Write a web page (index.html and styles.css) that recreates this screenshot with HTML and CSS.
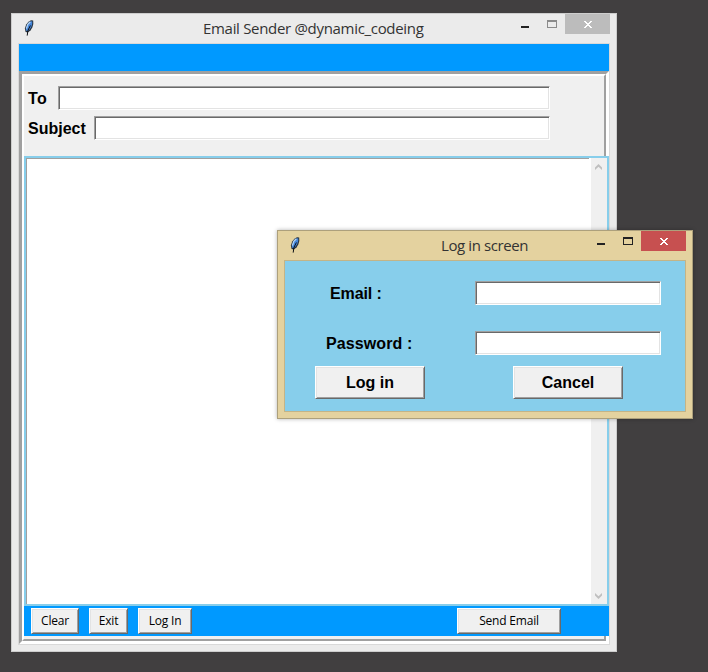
FILE: index.html
```html
<!DOCTYPE html>
<html lang="en">
<head>
<meta charset="utf-8">
<title>Email Sender</title>
<link rel="stylesheet" href="styles.css">
</head>
<body>
<svg width="0" height="0" class="defs">
  <symbol id="feather" viewBox="0 0 10 16">
    <path d="M7 .3 9.2.6 9.3 4 8.3 7.5 6.5 10.5 3.8 12.4 1.6 12 .9 8.5 2.2 4.6 4.5 1.8Z" fill="#26323f"/>
    <path d="M7 1.2 8.3 1.5 8.2 4 7.2 7 5.6 9.6 3.4 11.2 2 10.6 1.9 8.5 3 5 5 2.4Z" fill="#4587dc"/>
    <path d="M6.4 1.8 3.8 4.4 2.4 8.6" fill="none" stroke="#b4d3f2" stroke-width="1.3"/>
    <path d="M6.4 5.5 3.9 10.5 3.2 15.6" fill="none" stroke="#0b0f14" stroke-width="1"/>
  </symbol>
  <symbol id="cross" viewBox="0 0 8 7">
    <path d="M0 0h2v1h1v1h2V1h1V0h2v1H7v1H6v1H5v1h1v1h1v1h1v1H6V6H5V5H3v1H2v1H0V6h1V5h1V4h1V3H2V2H1V1H0Z" fill="#fff"/>
  </symbol>
</svg>
<main class="window main">
  <header class="titlebar">
    <svg class="feather"><use href="#feather"/></svg>
    <h1 class="title">Email Sender @dynamic_codeing</h1>
    <span class="min"></span><span class="max"></span>
    <span class="close"><svg><use href="#cross"/></svg></span>
  </header>
  <div class="client">
    <div class="band"></div>
    <div class="groove"><div class="panel">
      <div class="fields">
        <label class="row"><span class="to">To</span><input class="entry"></label>
        <label class="row"><span class="subject">Subject</span><input class="entry"></label>
      </div>
      <div class="editor">
        <div class="text"></div>
        <div class="scroll">
          <svg width="7" height="6" viewBox="0 0 7 6"><path d="M0 3.5 3.5 0 7 3.5V6L3.5 2.7 0 6Z" fill="#bfbfbf"/></svg>
          <svg width="7" height="6" viewBox="0 0 7 6"><path d="M0 2.5 3.5 6 7 2.5V0L3.5 3.3 0 0Z" fill="#bfbfbf"/></svg>
        </div>
      </div>
      <footer class="actions">
        <button class="btn clear"><span>Clear</span></button>
        <button class="btn exit"><span>Exit</span></button>
        <button class="btn login"><span>Log In</span></button>
        <button class="btn send"><span>Send Email</span></button>
      </footer>
    </div></div>
  </div>
</main>
<section class="window dialog">
  <header class="titlebar">
    <svg class="feather"><use href="#feather"/></svg>
    <h2 class="title">Log in screen</h2>
    <span class="min"></span><span class="max"></span>
    <span class="close"><svg><use href="#cross"/></svg></span>
  </header>
  <div class="client">
    <label class="line"><span class="email">Email :</span><input class="entry"></label>
    <label class="line"><span class="password">Password :</span><input class="entry"></label>
    <div class="choices">
      <button class="btn"><span>Log in</span></button>
      <button class="btn"><span>Cancel</span></button>
    </div>
  </div>
</section>
</body>
</html>
```
FILE: styles.css
```css
* { box-sizing: border-box; }
body {
  margin: 0;
  width: 708px;
  height: 672px;
  overflow: hidden;
  background: #413f40;
  font: bold 16px "Liberation Sans", Arial, sans-serif;
  color: #000;
}
.defs { position: absolute; }
.window { position: absolute; border: 1px solid; }
.main {
  left: 11px; top: 13px; width: 606px; height: 639px;
  background: #ebebeb; border-color: #cdcdcd;
  padding: 0 6px 6px;
}
.dialog {
  left: 277px; top: 230px; width: 416px; height: 189px;
  background: #e4d29f; border-color: #ada07c;
  padding: 0 6px 6px;
  box-shadow: 0 0 4px rgba(0, 0, 0, .3);
}
.titlebar { height: 29px; display: flex; align-items: flex-start; }
.feather { width: 10px; height: 16px; margin: 6px 0 0 6px; flex: none; }
.title {
  flex: 1; margin: 0; padding-top: 4px;
  font: 15px/20px "Open Sans", "Noto Sans", sans-serif;
  color: #333; white-space: nowrap;
}
.main .title { padding-left: 169px; letter-spacing: -.31px; }
.dialog .title { padding-left: 141px; letter-spacing: -.4px; }
.min { width: 8px; height: 2px; margin: 12px 18px 0 0; background: #222; }
.max { width: 10px; height: 8px; margin: 6px 8px 0 0; border: 1px solid #8b8b8b; border-top-width: 2px; }
.dialog .max { border-color: #222; }
.close {
  width: 45px; height: 20px; background: #bcbcbc;
  display: flex; align-items: center; justify-content: center;
}
.dialog .close { background: #c75050; }
.close svg { width: 8px; height: 7px; }
.client { border: 1px solid #d9d9d9; }
.main .client { height: 602px; }
.band { height: 27px; background: #0099ff; }
.groove {
  height: 573px; border: 3px solid;
  border-color: #a0a0a0 #fff #fff #a0a0a0;
}
.panel {
  height: 567px; border: 2px solid;
  border-color: #fff #a0a0a0 #a0a0a0 #fff;
  background: #f0f0f0;
}
.fields { height: 80px; padding: 10px 54px 0 4px; }
.row { display: flex; height: 24px; line-height: 26px; margin-bottom: 6px; }
.to { width: 30px; letter-spacing: .3px; }
.subject { width: 66px; }
.entry {
  flex: 1; min-width: 0; padding: 0; outline: 0; background: #fff;
  border: 1px solid; border-color: #a0a0a0 #fff #fff #a0a0a0;
  box-shadow: inset 1px 1px #696969, inset -1px -1px #e3e3e3;
}
.editor {
  position: relative; width: 585px; height: 450px;
  border: 2px solid #87ceeb; background: #fff; display: flex;
}
.text { flex: 1; border: 1px solid #a0a0a0; border-width: 1px 0 0 1px; margin-right: 2px; }
.scroll {
  width: 16px; background: #f0f0f0; display: flex; flex-direction: column;
  align-items: center; justify-content: space-between; padding: 6px 1px 5px 0;
}
.actions {
  position: relative; width: 585px; height: 30px; padding: 2px 48px 0 7px;
  background: #0099ff; display: flex;
}
.btn {
  padding: 0; background: #f0f0f0; color: #000;
  border: 1px solid; border-color: #fff #696969 #696969 #fff;
  box-shadow: inset 1px 1px #e3e3e3, inset -1px -1px #a0a0a0;
  font: inherit;
}
.actions .btn {
  height: 26px; margin-right: 10px;
  font: 12px/20px "Open Sans", "Noto Sans", sans-serif; letter-spacing: -.2px;
}
.actions .clear { width: 48px; }
.actions .exit { width: 39px; }
.actions .login { width: 54px; }
.actions .send { width: 104px; margin: 0 0 0 auto; }
.dialog .client { height: 152px; padding: 20px 24px 0 30px; background: #87ceeb; border-color: #c3b487; }
.line { display: flex; height: 24px; line-height: 26px; margin-bottom: 26px; }
.line span { width: 160px; }
.line .email { padding-left: 15px; letter-spacing: -.1px; }
.line .password { padding-left: 11px; letter-spacing: .1px; }
.line + .line { margin-bottom: 11px; }
.choices { display: flex; gap: 88px; }
.choices .btn { width: 110px; height: 33px; }
```
